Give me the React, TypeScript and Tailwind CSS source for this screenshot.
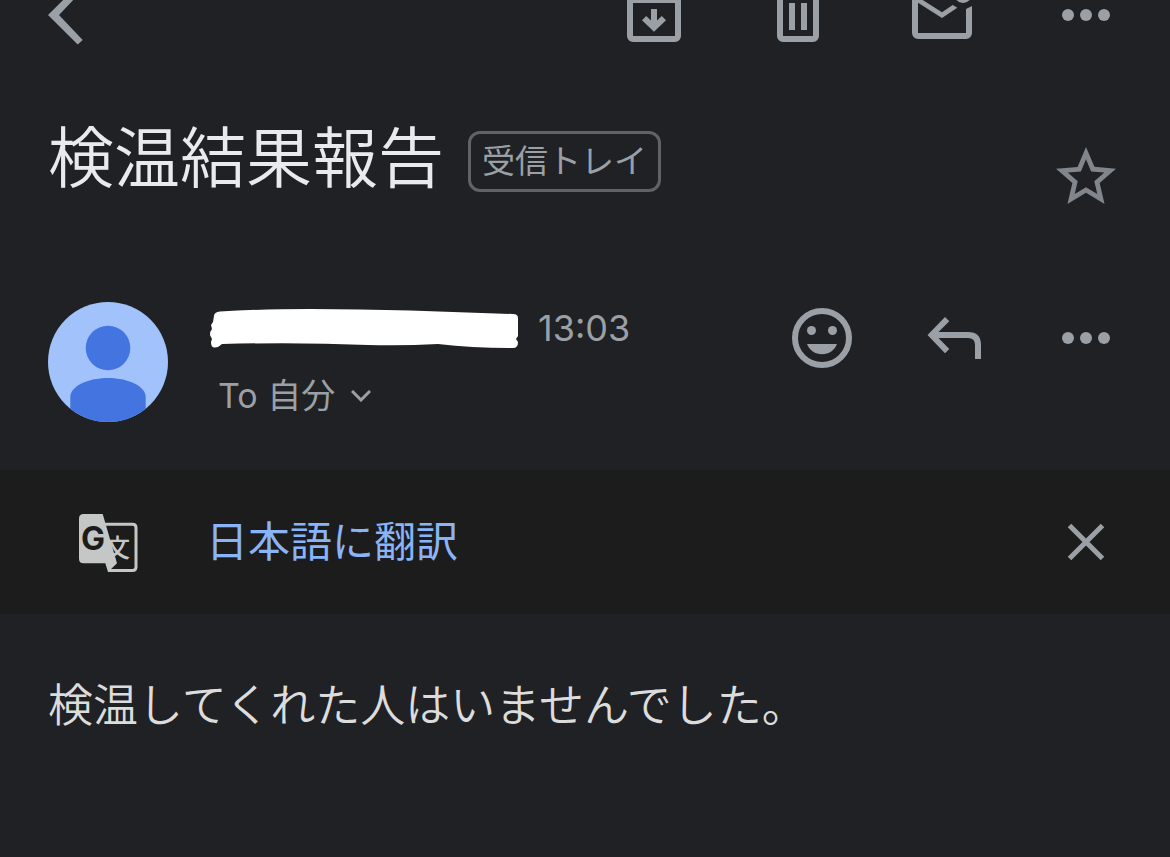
import type { ReactNode } from "react";

interface IconButtonProps {
  label: string;
  children: ReactNode;
}

function IconButton({ label, children }: IconButtonProps) {
  return (
    <button type="button" aria-label={label} className="block size-[72px] shrink-0 text-[#9aa0a6]">
      <svg viewBox="0 0 72 72" className="block size-full" fill="currentColor" aria-hidden="true">
        {children}
      </svg>
    </button>
  );
}

function MoreDots() {
  return (
    <>
      <circle cx="18" cy="36" r="6" />
      <circle cx="36" cy="36" r="6" />
      <circle cx="54" cy="36" r="6" />
    </>
  );
}

// The toolbar is scrolled partly out of view, so its icons hang off the top edge.
function Toolbar() {
  return (
    <header className="flex h-[51px] items-end justify-between overflow-hidden px-12">
      <button type="button" aria-label="戻る" className="h-[72px] w-9 shrink-0 text-[#9aa0a6]">
        <svg viewBox="0 0 36 72" className="block size-full" fill="currentColor" aria-hidden="true">
          <path d="M0 36 29.7 6.500 34.700 11 11 36l23.700 25-5 4.500z" />
        </svg>
      </button>
      <div className="flex gap-[72px]">
        <IconButton label="アーカイブ">
          <path
            fillRule="evenodd"
            d="M15 9h42l6 8v40a6 6 0 0 1-6 6H15a6 6 0 0 1-6-6V17zM15 24v33h42V24z"
          />
          <path d="M33 30h6v11.600l4.800-4.600 4.200 4.200-12 11.600-12-11.600 4.200-4.200 4.800 4.600z" />
        </IconButton>
        <IconButton label="削除">
          <path
            fillRule="evenodd"
            d="M12 12h12V9h24v3h12v6h-3v39a6 6 0 0 1-6 6H21a6 6 0 0 1-6-6V18h-3zM21 18v39h30V18z"
          />
          <path d="M27 24h6v27h-6zM39 24h6v27h-6z" />
        </IconButton>
        <IconButton label="未読にする">
          <path d="M12 12h33v6H16l.7 3L36 33.300 46.700 26l4.600 2.700L36 39 12 23.700V54h48V30l6-3v27a6 6 0 0 1-6 6H12a6 6 0 0 1-6-6V18a6 6 0 0 1 6-6z" />
          <circle cx="57" cy="15" r="9" />
        </IconButton>
        <IconButton label="その他">
          <MoreDots />
        </IconButton>
      </div>
    </header>
  );
}

function Subject() {
  return (
    <section className="flex items-start justify-between px-12 pt-20">
      <div className="flex flex-wrap items-start gap-6">
        <h1 className="text-[66px] leading-[54px] font-[350] text-[#e8eaed]">検温結果報告</h1>
        <span className="rounded-xl border-3 border-[#5f6368] px-[11px] text-[33px] leading-[55px] text-[#9aa0a6]">
          受信トレイ
        </span>
      </div>
      <div className="pt-[10px]">
        <IconButton label="スターを付ける">
          <path
            fill="#80868b"
            d="M66 27.720 44.430 25.860 36 6l-8.430 19.890L6 27.720l16.380 14.190L17.460 63 36 51.810 54.540 63l-4.890-21.090zM36 46.200l-11.280 6.810 3-12.840-9.960-8.640 13.140-1.140L36 18.300l5.130 12.120 13.140 1.140-9.960 8.640 3 12.840z"
          />
        </IconButton>
      </div>
    </section>
  );
}

function Avatar() {
  return (
    <svg viewBox="0 0 120 120" className="size-[120px] shrink-0" role="img" aria-label="プロフィール写真">
      <clipPath id="avatar">
        <circle cx="60" cy="60" r="60" />
      </clipPath>
      <g clipPath="url(#avatar)">
        <path fill="#a1c2fa" d="M0 0h120v120H0z" />
        <circle cx="60" cy="46" r="22.300" fill="#4374e0" />
        <path fill="#4374e0" d="M22.300 120V95c0-10 16-19 37.700-19s37.700 9 37.700 19v25z" />
      </g>
    </svg>
  );
}

function MessageHeader() {
  return (
    <section className="flex items-start px-12 pt-[89px] pb-12">
      <Avatar />
      <div className="ml-[42px] flex flex-1 flex-col gap-4 leading-[52px] text-[#9aa0a6]">
        <div className="flex items-center gap-5">
          <svg viewBox="0 0 308 42" className="h-[42px] w-[308px]" role="img" aria-label="差出人">
            <path
              fill="#fff"
              d="M4 9q0-4 6-4.500Q50 2 100 2t100 1.500L303 7q5 0 5 4v18l-2 3 2 3q0 6-5 6-40 0-75-4-35 2-70 1-70-3-146-1-4 4-8 3.500Q1 40 1 35l1-3-2-4q0-4 2-6l-1-4 2-3z"
            />
          </svg>
          <time className="text-[36px] leading-[52px]">13:03</time>
        </div>
        <button type="button" className="flex items-center gap-4 self-start pl-2 text-[34px] leading-[52px]">
          <span>To 自分</span>
          <svg viewBox="0 0 20 12" className="h-3 w-5" fill="none" stroke="currentColor" strokeWidth="3" aria-hidden="true">
            <path d="m1 1 9 9 9-9" />
          </svg>
        </button>
      </div>
      <div className="flex gap-[60px]">
        <IconButton label="リアクション">
          <circle cx="36" cy="36" r="27" fill="none" stroke="currentColor" strokeWidth="6" />
          <circle cx="25.500" cy="28.500" r="4.500" />
          <circle cx="46.500" cy="28.500" r="4.500" />
          <path d="M21 42h30c-2.500 6.500-8 10.300-15 10.300S23.500 48.500 21 42z" />
        </IconButton>
        <IconButton label="返信">
          <path d="M9.500 33 27 15l4.300 4.300L20.500 30H50q13 0 13 13v14h-6V43q0-7-7-7H20.500l10.800 11L27 51.300z" />
        </IconButton>
        <IconButton label="メッセージのその他の操作">
          <MoreDots />
        </IconButton>
      </div>
    </section>
  );
}

function TranslateIcon() {
  return (
    <svg viewBox="0 0 72 72" className="size-[72px] shrink-0" aria-hidden="true">
      <path
        fill="none"
        stroke="#c4c7c5"
        strokeWidth="3"
        d="M33 18.200h27.500q3.500 0 3.500 3.500V61q0 3.500-3.500 3.500H36"
      />
      <path fill="#c4c7c5" d="M11.500 8h19.200L45 57.300 36 66l-2.700-8.700H11.500Q7 57.300 7 52.800V12.500Q7 8 11.500 8z" />
      <text x="33" y="51" fontSize="25" fontWeight="500" fill="#c4c7c5">
        文
      </text>
      <text x="9" y="44" fontSize="32" fontWeight="700" fill="#1c1c1c">
        G
      </text>
    </svg>
  );
}

function TranslateBar() {
  return (
    <section className="flex h-36 items-center bg-[#1c1c1c] pr-12 pl-[72px]">
      <TranslateIcon />
      <button type="button" className="ml-[62px] text-[42px] leading-[60px] text-[#8ab4f8]">
        日本語に翻訳
      </button>
      <div className="ml-auto">
        <IconButton label="閉じる">
          <path fill="none" stroke="currentColor" strokeWidth="5" d="m19.500 19.500 33 33m0-33-33 33" />
        </IconButton>
      </div>
    </section>
  );
}

export default function App() {
  return (
    <main
      lang="ja"
      className="min-h-screen bg-[#202124] font-[Inter,'Noto_Sans_CJK_JP',sans-serif]"
    >
      <Toolbar />
      <Subject />
      <MessageHeader />
      <TranslateBar />
      <p className="px-12 py-[60px] text-[45px] leading-[64px] font-[350] text-[#dcdcdc]">
        検温してくれた人はいませんでした。
      </p>
    </main>
  );
}
